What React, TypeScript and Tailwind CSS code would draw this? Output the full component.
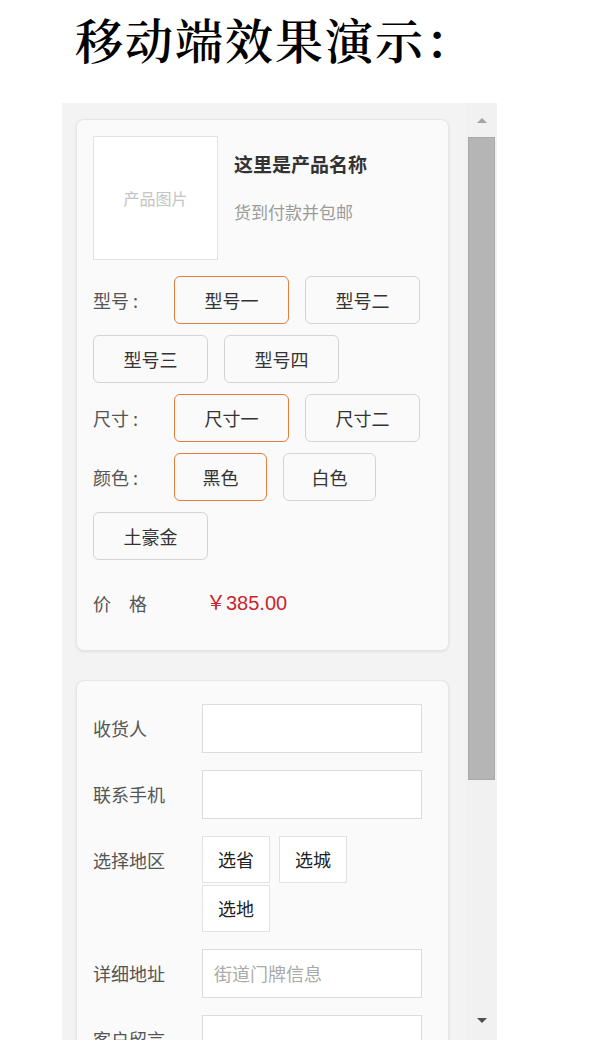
import React from "react";

const font = { fontFamily: '"Noto Sans CJK SC", "Noto Sans", sans-serif' };

interface OptionGroup {
  label: string;
  options: string[];
}

const groups: OptionGroup[] = [
  { label: "型号 :", options: ["型号一", "型号二", "型号三", "型号四"] },
  { label: "尺寸 :", options: ["尺寸一", "尺寸二"] },
  { label: "颜色 :", options: ["黑色", "白色", "土豪金"] },
];

function OptionRow({ group }: { group: OptionGroup }) {
  return (
    <div className="flex flex-wrap items-center gap-x-4 gap-y-[11px]">
      <span className="w-[65px] text-[18px] text-[#555]">{group.label}</span>
      {group.options.map((opt, i) => (
        <button
          key={opt}
          type="button"
          className={`flex h-[48px] items-center justify-center rounded-md border bg-[#fafafa] text-[18px] text-[#333] ${
            opt.length > 2 ? "w-[115px]" : "w-[93px]"
          } ${i === 0 ? "border-[#e0803e]" : "border-[#d4d4d4]"}`}
        >
          {opt}
        </button>
      ))}
    </div>
  );
}

function Field({ label, children }: { label: string; children: React.ReactNode }) {
  return (
    <div className="flex items-start">
      <span className="w-[109px] pt-[11px] text-[18px] text-[#555]">{label}</span>
      {children}
    </div>
  );
}

function TextInput({ placeholder }: { placeholder?: string }) {
  return (
    <div className="flex h-[49px] w-[220px] items-center border border-[#dcdcdc] bg-white px-[11px] text-[18px] text-[#aaa]">
      {placeholder}
    </div>
  );
}

export default function App() {
  return (
    <div className="h-[1044px] w-[600px] overflow-hidden bg-white" style={font}>
      <h1
        className="pl-[75px] pt-[11px] text-[48px] leading-[56px] font-semibold tracking-[2px] text-black"
        style={{ fontFamily: '"Noto Serif CJK SC", "Noto Sans CJK SC", serif' }}
      >
        移动端效果演示：
      </h1>

      <div className="ml-[62px] mt-[36px] flex h-[937px] w-[435px] overflow-hidden bg-[#f3f3f3]">
        {/* page content */}
        <div className="flex w-[404px] flex-col gap-[29px] px-[14px] pt-[16px]">
          <div className="w-[373px] rounded-lg border border-[#e6e6e6] bg-[#fafafa] px-4 pt-4 pb-[32px] shadow-[0_1px_3px_rgba(0,0,0,0.08)]">
            <div className="flex gap-4">
              <div className="flex h-[124px] w-[125px] items-center justify-center border border-[#e2e2e2] bg-white text-[16px] text-[#c4c4c4]">
                产品图片
              </div>
              <div className="pt-[14px]">
                <div className="text-[19px] font-bold text-[#333]">这里是产品名称</div>
                <div className="mt-[20px] text-[17px] text-[#9a9a9a]">货到付款并包邮</div>
              </div>
            </div>

            <div className="mt-[16px] flex flex-col gap-[11px]">
              {groups.map((g) => (
                <OptionRow key={g.label} group={g} />
              ))}
            </div>

            <div className="mt-[28px] flex items-center text-[18px]">
              <span className="w-[113px] text-[#555]">价&emsp;格</span>
              <span
                className="text-[20px] text-[#c9252f]"
                style={{ fontFamily: '"Liberation Sans", "Noto Sans CJK SC", sans-serif' }}
              >
                ￥385.00
              </span>
            </div>
          </div>

          <div className="w-[373px] rounded-lg border border-[#e6e6e6] bg-[#fafafa] px-4 pt-[23px] pb-6 shadow-[0_1px_3px_rgba(0,0,0,0.08)]">
            <div className="flex flex-col gap-[17px]">
              <Field label="收货人">
                <TextInput />
              </Field>
              <Field label="联系手机">
                <TextInput />
              </Field>
              <Field label="选择地区">
                <div className="flex w-[150px] flex-wrap gap-x-[9px] gap-y-[2px]">
                  {["选省", "选城", "选地"].map((s) => (
                    <div
                      key={s}
                      className="flex h-[47px] w-[68px] items-center justify-center border border-[#e2e2e2] bg-white text-[18px] text-[#222]"
                    >
                      {s}
                    </div>
                  ))}
                </div>
              </Field>
              <Field label="详细地址">
                <TextInput placeholder="街道门牌信息" />
              </Field>
              <Field label="客户留言">
                <TextInput />
              </Field>
            </div>
          </div>
        </div>

        {/* scrollbar */}
        <div className="flex w-[31px] flex-col items-center bg-[#f1f1f1]">
          <div className="flex h-[34px] w-full items-center justify-center">
            <div className="h-0 w-0 border-x-[5px] border-b-[5px] border-x-transparent border-b-[#a3a3a3]" />
          </div>
          <div className="h-[643px] w-[27px] border border-[#a9a9a9] bg-[#b5b5b5]" />
          <div className="flex-1" />
          <div className="flex h-[22px] w-full items-start justify-center">
            <div className="h-0 w-0 border-x-[5px] border-t-[5px] border-x-transparent border-t-[#505050]" />
          </div>
        </div>
      </div>
    </div>
  );
}
